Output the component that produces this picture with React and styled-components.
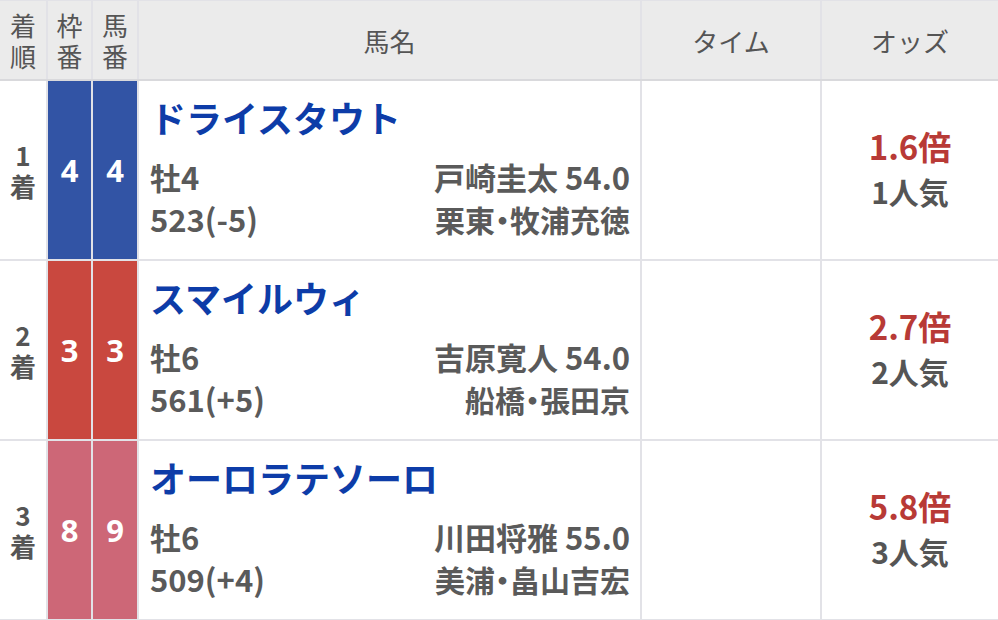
import React from "react";
import styled, { createGlobalStyle } from "styled-components";

const Global = createGlobalStyle`
  html, body { margin: 0; padding: 0; background: #ffffff; }
  body {
    font-family: "Noto Sans CJK JP", "Noto Sans", sans-serif;
    color: #555555;
    overflow: hidden;
  }
`;

const COLS = "46px 43px 44px 501px 178px 176px";

const Table = styled.div`
  width: 998px;
  display: flex;
  flex-direction: column;
  background: #ffffff;
`;

const HeaderRow = styled.div`
  display: grid;
  grid-template-columns: ${COLS};
  column-gap: 2px;
  height: 78px;
  background: #e2e2e7;
  border-top: 1px solid #e2e2e7;
  border-bottom: 2px solid #d9d9dc;
`;

const HeadCell = styled.div`
  background: #ebebeb;
  display: flex;
  flex-direction: column;
  align-items: center;
  justify-content: center;
  text-align: center;
  font-size: 26px;
  font-weight: 400;
  color: #555555;
`;

const HeadLine = styled.span`
  display: block;
  line-height: 31px;
`;

const BodyRow = styled.div`
  display: grid;
  grid-template-columns: ${COLS};
  column-gap: 2px;
  height: 178px;
  background: #e2e2e7;
  border-bottom: 2px solid #e2e2e7;
`;

const RankCell = styled.div`
  background: #ffffff;
  display: flex;
  flex-direction: column;
  align-items: center;
  justify-content: center;
  text-align: center;
  font-size: 26px;
  font-weight: 700;
  color: #555555;
`;

const RankLine = styled.span`
  display: block;
  line-height: 31px;
`;

const NumCell = styled.div`
  background: ${(p) => p.$bg};
  display: flex;
  align-items: center;
  justify-content: center;
  color: #ffffff;
  font-size: 31px;
  font-weight: 700;
  font-family: "Noto Sans", "Noto Sans CJK JP", sans-serif;
`;

const NameCell = styled.div`
  background: #ffffff;
  display: flex;
  flex-direction: column;
  padding: 14px 10px 0 11px;
`;

const HorseName = styled.div`
  font-size: 36px;
  line-height: 44px;
  font-weight: 700;
  color: #0d3ca8;
  margin-bottom: 17px;
`;

const InfoLine = styled.div`
  display: flex;
  justify-content: space-between;
  align-items: center;
  font-size: 31px;
  line-height: 42px;
  font-weight: 700;
  color: #5a5a5a;
  font-feature-settings: "palt";
`;

const Trainer = styled.span`
  font-size: 30px;
`;

const EmptyCell = styled.div`
  background: #ffffff;
`;

const OddsCell = styled.div`
  background: #ffffff;
  display: flex;
  flex-direction: column;
  align-items: center;
  justify-content: center;
  font-weight: 700;
  padding-bottom: 2px;
`;

const Odds = styled.div`
  font-size: 33px;
  line-height: 45px;
  color: #b83a36;
`;

const Popularity = styled.div`
  font-size: 30px;
  line-height: 45px;
  color: #555555;
`;

const FRAME = {
  4: "#3254a5",
  3: "#c9483f",
  8: "#cd6777",
};

const rows = [
  {
    rank: 1,
    frame: 4,
    num: 4,
    name: "ドライスタウト",
    sex: "牡4",
    jockey: "戸崎圭太 54.0",
    weight: "523(-5)",
    trainer: "栗東・牧浦充徳",
    odds: "1.6倍",
    pop: "1人気",
  },
  {
    rank: 2,
    frame: 3,
    num: 3,
    name: "スマイルウィ",
    sex: "牡6",
    jockey: "吉原寛人 54.0",
    weight: "561(+5)",
    trainer: "船橋・張田京",
    odds: "2.7倍",
    pop: "2人気",
  },
  {
    rank: 3,
    frame: 8,
    num: 9,
    name: "オーロラテソーロ",
    sex: "牡6",
    jockey: "川田将雅 55.0",
    weight: "509(+4)",
    trainer: "美浦・畠山吉宏",
    odds: "5.8倍",
    pop: "3人気",
  },
];

const headers = [["着", "順"], ["枠", "番"], ["馬", "番"], ["馬名"], ["タイム"], ["オッズ"]];

export default function App() {
  return (
    <>
      <Global />
      <Table>
        <HeaderRow>
          {headers.map((h, i) => (
            <HeadCell key={i}>
              {h.map((t) => (
                <HeadLine key={t}>{t}</HeadLine>
              ))}
            </HeadCell>
          ))}
        </HeaderRow>
        {rows.map((r) => (
          <BodyRow key={r.rank}>
            <RankCell>
              <RankLine>{r.rank}</RankLine>
              <RankLine>着</RankLine>
            </RankCell>
            <NumCell $bg={FRAME[r.frame]}>{r.frame}</NumCell>
            <NumCell $bg={FRAME[r.frame]}>{r.num}</NumCell>
            <NameCell>
              <HorseName>{r.name}</HorseName>
              <InfoLine>
                <span>{r.sex}</span>
                <span>{r.jockey}</span>
              </InfoLine>
              <InfoLine>
                <span>{r.weight}</span>
                <Trainer>{r.trainer}</Trainer>
              </InfoLine>
            </NameCell>
            <EmptyCell />
            <OddsCell>
              <Odds>{r.odds}</Odds>
              <Popularity>{r.pop}</Popularity>
            </OddsCell>
          </BodyRow>
        ))}
      </Table>
    </>
  );
}
